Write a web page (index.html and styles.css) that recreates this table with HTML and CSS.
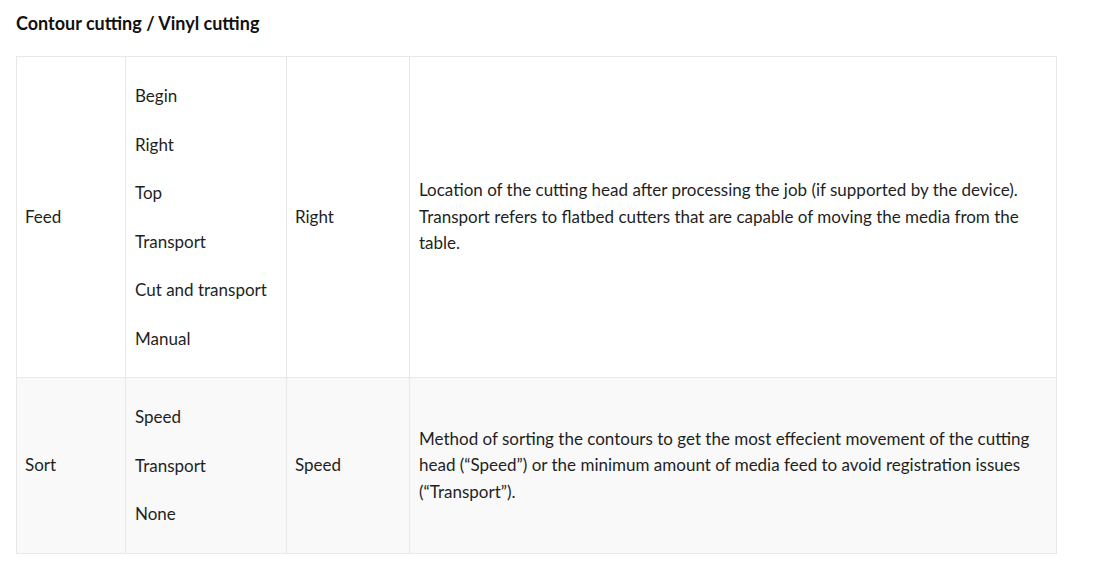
FILE: index.html
```html
<!DOCTYPE html>
<html lang="en">
<head>
<meta charset="utf-8">
<title>Contour cutting / Vinyl cutting</title>
<link rel="stylesheet" href="styles.css">
</head>
<body>
<main class="page">
  <h3 class="title">Contour cutting / Vinyl cutting</h3>
  <table class="params">
    <colgroup>
      <col class="c1"><col class="c2"><col class="c3"><col class="c4">
    </colgroup>
    <tbody>
      <tr>
        <td>Feed</td>
        <td>
          <div class="opts">
            <span>Begin</span><span>Right</span><span>Top</span><span>Transport</span><span>Cut and transport</span><span>Manual</span>
          </div>
        </td>
        <td>Right</td>
        <td>Location of the cutting head after processing the job (if supported by the device). Transport refers to flatbed cutters that are capable of moving the media from the table.</td>
      </tr>
      <tr class="alt">
        <td>Sort</td>
        <td>
          <div class="opts">
            <span>Speed</span><span>Transport</span><span>None</span>
          </div>
        </td>
        <td>Speed</td>
        <td>Method of sorting the contours to get the most effecient movement of the cutting head (“Speed”) or the minimum amount of media feed to avoid registration issues (“Transport”).</td>
      </tr>
    </tbody>
  </table>
</main>
</body>
</html>
```
FILE: styles.css
```css
html, body {
  margin: 0;
  padding: 0;
  background: #ffffff;
}
body {
  font-family: Lato, "Open Sans", sans-serif;
  color: #1f1f1f;
}
.page {
  padding: 11px 16px;
}
.title {
  margin: 0 0 21px;
  font-size: 18px;
  line-height: 24px;
  font-weight: 700;
  color: #111111;
}
.params {
  width: 1040px;
  border-collapse: collapse;
  table-layout: fixed;
  font-size: 17px;
  line-height: 26.5px;
}
.c1 { width: 109px; }
.c2 { width: 161px; }
.c3 { width: 123px; }
.c4 { width: 647px; }
.params td {
  border: 1px solid #e8e8e8;
  padding: 8px 9px 8px 8px;
  vertical-align: middle;
}
.params tr.alt td {
  background: #f9f9f9;
}
.opts {
  display: flex;
  flex-direction: column;
  gap: 22px;
  padding: 18px 0 17px 1px;
}
.params td:last-child {
  padding-left: 9px;
  padding-right: 18px;
}
```
